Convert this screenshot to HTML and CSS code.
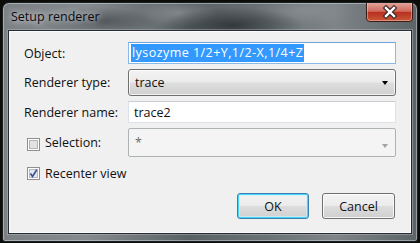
FILE: index.html
```html
<!DOCTYPE html>
<html>
<head>
<meta charset="utf-8">
<link rel="stylesheet" href="styles.css">
</head>
<body>
<div class="window">
  <div class="titlebar">
    <span class="title">Setup renderer</span>
    <div class="close">
      <svg width="47" height="19" viewBox="0 0 47 19">
        <defs>
          <linearGradient id="cg" x1="0" y1="0" x2="0" y2="1">
            <stop offset="0" stop-color="#e3a49a"/>
            <stop offset="0.45" stop-color="#cf6a5c"/>
            <stop offset="0.5" stop-color="#b8301f"/>
            <stop offset="1" stop-color="#c95a3a"/>
          </linearGradient>
        </defs>
        <path d="M0.5 0 V15 Q0.5 18.5 4 18.5 H43 Q46.5 18.5 46.5 15 V0" fill="url(#cg)" stroke="#3b1c18"/>
        <path d="M1.5 0 V15 Q1.5 17.5 4 17.5 H43 Q45.5 17.5 45.5 15 V0" fill="none" stroke="rgba(255,210,200,0.45)"/>
        <g stroke-linecap="square">
          <path d="M20 5 L28 13 M28 5 L20 13" stroke="#3a2a2a" stroke-width="4.6"/>
          <path d="M20 5 L28 13 M28 5 L20 13" stroke="#ffffff" stroke-width="2.4"/>
        </g>
      </svg>
    </div>
  </div>
  <div class="client">
    <div class="form">
      <label class="lbl">Object:</label>
      <div class="edit focus"><span class="sel">lysozyme 1/2+Y,1/2-X,1/4+Z</span></div>

      <label class="lbl">Renderer type:</label>
      <div class="combo"><span>trace</span><span class="arrow"></span></div>

      <label class="lbl">Renderer name:</label>
      <div class="edit"><span>trace2</span></div>

      <div class="check-row">
        <svg class="cb" width="13" height="13" viewBox="0 0 13 13">
          <rect x="0.5" y="0.5" width="12" height="12" fill="#fff" stroke="#8e8f8f"/>
          <rect x="2.5" y="2.5" width="8" height="8" fill="#e2e2e2" stroke="#b3b3b3"/>
        </svg>
        <span>Selection:</span>
      </div>
      <div class="combo disabled"><span>*</span><span class="arrow"></span></div>

      <div class="check-row span2">
        <svg class="cb" width="13" height="13" viewBox="0 0 13 13">
          <rect x="0.5" y="0.5" width="12" height="12" fill="#fff" stroke="#8e8f8f"/>
          <rect x="2.5" y="2.5" width="8" height="8" fill="#e4e8ee" stroke="#b6bcc6"/>
          <path d="M3.5 6.5 L5.5 9.5 L9.8 2.8" fill="none" stroke="#3c4f8f" stroke-width="1.6"/>
        </svg>
        <span>Recenter view</span>
      </div>
    </div>
    <div class="buttons">
      <div class="btn default">OK</div>
      <div class="btn cancel">Cancel</div>
    </div>
  </div>
</div>
</body>
</html>
```
FILE: styles.css
```css
html, body {
  margin: 0;
  padding: 0;
}
body {
  width: 420px;
  height: 243px;
  background: #0c0c09;
  font-family: "Open Sans", "Noto Sans", sans-serif;
  font-size: 12.5px;
  color: #111;
  overflow: hidden;
}
.window {
  box-sizing: border-box;
  margin: 2px 0 0 2px;
  width: 416px;
  height: 240px;
  border: 1px solid #1b1f22;
  border-radius: 7px 7px 3px 3px;
  background:
    radial-gradient(ellipse 60px 14px at 95px 18px, rgba(40,46,50,0.55), rgba(40,46,50,0) 100%),
    radial-gradient(ellipse 70px 18px at 230px 22px, rgba(30,36,40,0.7), rgba(30,36,40,0) 100%),
    radial-gradient(ellipse 50px 14px at 300px 8px, rgba(150,156,160,0.5), rgba(150,156,160,0) 100%),
    radial-gradient(ellipse 40px 14px at 175px 10px, rgba(160,166,170,0.5), rgba(160,166,170,0) 100%),
    linear-gradient(to right, #7a8084 0%, #858b8f 20%, #5a6165 45%, #6c7377 65%, #7e8488 80%, #5d6468 100%);
  box-shadow: inset 0 0 0 1px rgba(220,228,235,0.45);
  padding: 0 4px 0 5px;
  display: flex;
  flex-direction: column;
}
.titlebar {
  height: 27px;
  display: flex;
  align-items: flex-start;
  justify-content: space-between;
}
.title {
  margin: 5px 0 0 3px;
  line-height: 17px;
  color: #0a0a14;
  text-shadow: 0 0 6px rgba(255,255,255,0.7), 0 0 10px rgba(255,255,255,0.5), 0 0 14px rgba(255,255,255,0.4);
}
.close {
  height: 19px;
}
.close svg {
  display: block;
}
.client {
  box-sizing: border-box;
  width: 404px;
  height: 204px;
  border: 1px solid #262c30;
  background: #f0f0f0;
  box-shadow: inset 0 0 0 1px #fbfbfb, 0 0 0 1px rgba(200,210,218,0.35);
  padding: 11px 14px 0 14px;
}
.form {
  display: grid;
  grid-template-columns: 105px 268px;
  grid-template-rows: 22px 27px 22px 29px 22px;
  row-gap: 5px;
}
.lbl {
  display: flex;
  align-items: center;
  padding-left: 1px;
}
.edit {
  box-sizing: border-box;
  border: 1px solid #dde2e8;
  border-top-color: #c9ced4;
  background: #fff;
  display: flex;
  align-items: center;
  padding-left: 5px;
}
.edit.focus {
  border: 1px solid #8ab9e6;
  border-top-color: #6fa4d8;
  padding-left: 2px;
}
.sel {
  background: #3399ff;
  color: #fff;
  line-height: 18px;
  padding: 0 1px;
  letter-spacing: 0.45px;
}
.combo {
  box-sizing: border-box;
  border: 1px solid #707070;
  border-radius: 3px;
  background: linear-gradient(#f3f3f3 0%, #ebebeb 48%, #dddddd 52%, #d0d0d0 100%);
  box-shadow: inset 0 0 0 1px rgba(255,255,255,0.7);
  display: flex;
  align-items: center;
  justify-content: space-between;
  padding: 0 7px 0 6px;
}
.arrow {
  width: 0;
  height: 0;
  border-left: 3.5px solid transparent;
  border-right: 3.5px solid transparent;
  border-top: 4px solid #000;
  margin-top: 1px;
}
.combo.disabled {
  border-color: #adb2b5;
  border-radius: 2px;
  background: #f4f4f4;
  box-shadow: none;
  color: #6d6d6d;
  align-items: flex-start;
  padding-top: 5px;
}
.combo.disabled .arrow {
  border-top-color: #a2a2a2;
  margin-top: 10px;
}
.check-row {
  display: flex;
  align-items: center;
  gap: 5px;
  padding-left: 4px;
}
.check-row .cb {
  flex: none;
  margin-top: 3px;
}
.check-row.span2 {
  grid-column: 1 / 3;
}
.check-row.span2 .cb {
  margin-top: 1px;
}
.buttons {
  display: flex;
  justify-content: flex-end;
  gap: 13px;
  margin-top: 9px;
  padding-right: 2px;
}
.btn {
  box-sizing: border-box;
  height: 26px;
  border: 1px solid #707070;
  border-radius: 3px;
  background: linear-gradient(#f3f3f3 0%, #ebebeb 48%, #dddddd 52%, #cfcfcf 100%);
  box-shadow: inset 0 0 0 1px rgba(255,255,255,0.8);
  display: flex;
  align-items: center;
  justify-content: center;
}
.btn.default {
  width: 72px;
  border-color: #3c7fb1;
  box-shadow: inset 0 0 0 1px #48d7fb, inset 0 0 0 2px rgba(200,240,255,0.6);
}
.btn.cancel {
  width: 73px;
}
```
